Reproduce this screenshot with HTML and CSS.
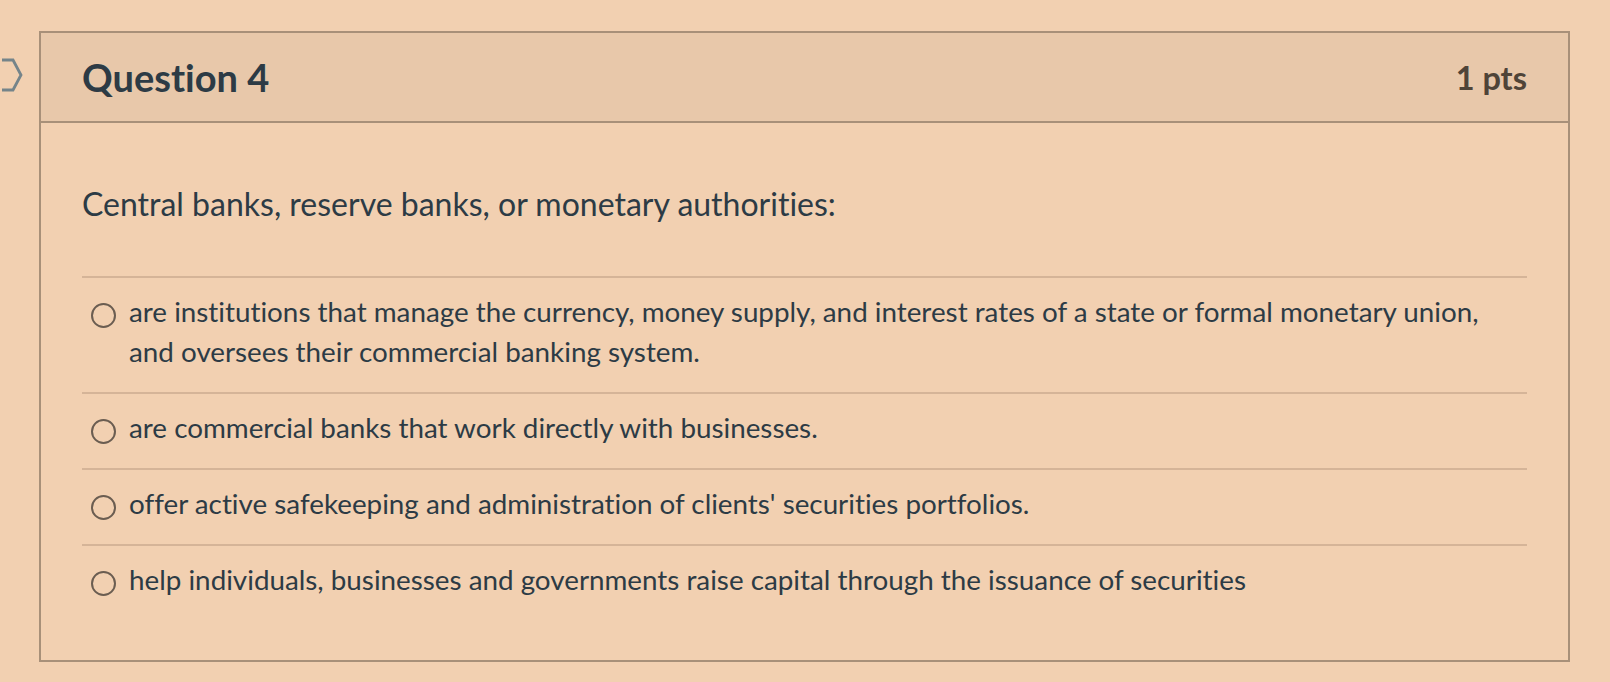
FILE: index.html
```html
<!DOCTYPE html>
<html lang="en">
<head>
    <meta charset="UTF-8">
    <title>Question 4</title>
    <link rel="stylesheet" href="styles.css">
</head>
<body>

<div class="question">
    <svg class="bookmark" width="22" height="34" viewBox="0 0 22 34">
        <path d="M-4 2 H11 L19 17 L11 32 H-4" fill="none" stroke="#75848a" stroke-width="2.8" stroke-linejoin="miter"/>
    </svg>

    <div class="question-header">
        <h2 class="question-title">Question 4</h2>
        <span class="question-points">1 pts</span>
    </div>

    <div class="question-body">
        <p class="question-text">Central banks, reserve banks, or monetary authorities:</p>

        <div class="answers">
            <label class="answer">
                <input type="radio" name="q4">
                <span>are institutions that manage the currency, money supply, and interest rates of a state or formal monetary union, and oversees their commercial banking system.</span>
            </label>
            <label class="answer">
                <input type="radio" name="q4">
                <span>are commercial banks that work directly with businesses.</span>
            </label>
            <label class="answer">
                <input type="radio" name="q4">
                <span>offer active safekeeping and administration of clients' securities portfolios.</span>
            </label>
            <label class="answer">
                <input type="radio" name="q4">
                <span>help individuals, businesses and governments raise capital through the issuance of securities</span>
            </label>
        </div>
    </div>
</div>

</body>
</html>
```

FILE: styles.css
```css
:root {
    --page-bg: #f2d0b1;
    --header-bg: #e8c8aa;
    --border: #a89079;
    --divider: #d5b498;
    --text: #2d3b45;
    --muted: #4f4438;
    --radio: #6b5d51;
}

body {
    margin: 0;
    padding: 31px 40px 20px 39px;
    background: var(--page-bg);
    color: var(--text);
    font-family: Lato, "Open Sans", sans-serif;
    font-variant-ligatures: none;
}

.question {
    position: relative;
    border: 2px solid var(--border);
}

.bookmark {
    position: absolute;
    left: -39px;
    top: 25px;
}

.question-header {
    display: flex;
    align-items: center;
    justify-content: space-between;
    height: 88px;
    padding: 0 41px 0 41px;
    background: var(--header-bg);
    border-bottom: 2px solid var(--border);
}

.question-title {
    margin: 0;
    font-size: 38px;
    font-weight: bold;
}

.question-points {
    font-size: 32.5px;
    font-weight: bold;
    color: var(--muted);
}

.question-body {
    padding: 60px 41px 40px 41px;
}

.question-text {
    margin: 0 0 51px 0;
    font-size: 32px;
    line-height: 42px;
}

.answer {
    display: flex;
    align-items: flex-start;
    gap: 13px;
    padding: 14px 40px 20px 9px;
    border-top: 2px solid var(--divider);
    font-size: 27.8px;
    line-height: 40px;
    cursor: pointer;
}

.answer input {
    appearance: none;
    flex: none;
    width: 25px;
    height: 25px;
    margin: 11px 0 0 0;
    border: 2px solid var(--radio);
    border-radius: 50%;
    background: transparent;
}

.answer input:checked {
    background: radial-gradient(circle, var(--radio) 0 5px, transparent 6px);
}
```
